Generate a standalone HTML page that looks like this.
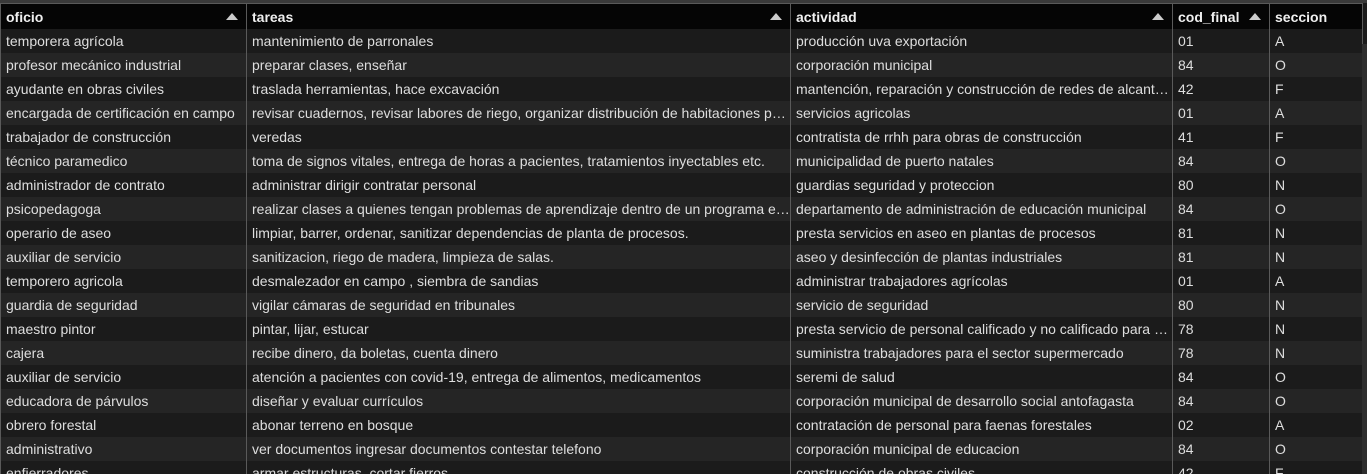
<!DOCTYPE html><html style="overflow:hidden;height:474px"><head><meta charset="utf-8"><style>
body{margin:0;width:1367px;height:474px;overflow:hidden;background:#1b1b1b;font-family:"Liberation Sans","DejaVu Sans",sans-serif;font-size:14px;color:#dedede;position:relative}
.top{position:absolute;left:0;top:0;width:1367px;height:3px;background:#3a3a3a}
table{position:absolute;left:0;top:3px;border-collapse:collapse;table-layout:fixed;width:1362px}
td,th{height:24px;padding:0 0 0 5px;white-space:nowrap;overflow:hidden;text-overflow:ellipsis;border-right:1px solid #5a5a5a;line-height:24px;text-align:left}
th{background:#050505;color:#f0f0f0;font-weight:bold;height:25px;border-left:1px solid #5a5a5a;border-top:1px solid #5a5a5a;position:relative}
th .a{position:absolute;right:8px;top:9px;width:0;height:0;border-left:6px solid transparent;border-right:6px solid transparent;border-bottom:7px solid #ccc}
tr:nth-child(odd) td{background:#1b1b1b}
tr:nth-child(even) td{background:#252525}
td:first-child{border-left:1px solid #5a5a5a}
.sb{position:absolute;left:1362px;top:44px;width:5px;height:430px;background:#2e2e2e}
</style></head><body><div class="top"></div>
<table>
<colgroup><col style="width:246px"><col style="width:544px"><col style="width:382px"><col style="width:97px"><col style="width:93px"></colgroup>
<thead><tr><th>oficio<span class="a"></span></th><th>tareas<span class="a"></span></th><th>actividad<span class="a"></span></th><th>cod_final<span class="a"></span></th><th>seccion</th></tr></thead>
<tbody>
<tr><td>temporera agrícola</td><td>mantenimiento de parronales</td><td>producción uva exportación</td><td>01</td><td>A</td></tr>
<tr><td>profesor mecánico industrial</td><td>preparar clases, enseñar</td><td>corporación municipal</td><td>84</td><td>O</td></tr>
<tr><td>ayudante en obras civiles</td><td>traslada herramientas, hace excavación</td><td>mantención, reparación y construcción de redes de alcantarillado</td><td>42</td><td>F</td></tr>
<tr><td>encargada de certificación en campo</td><td>revisar cuadernos, revisar labores de riego, organizar distribución de habitaciones para</td><td>servicios agricolas</td><td>01</td><td>A</td></tr>
<tr><td>trabajador de construcción</td><td>veredas</td><td>contratista de rrhh para obras de construcción</td><td>41</td><td>F</td></tr>
<tr><td>técnico paramedico</td><td>toma de signos vitales, entrega de horas a pacientes, tratamientos inyectables etc.</td><td>municipalidad de puerto natales</td><td>84</td><td>O</td></tr>
<tr><td>administrador de contrato</td><td>administrar dirigir contratar personal</td><td>guardias seguridad y proteccion</td><td>80</td><td>N</td></tr>
<tr><td>psicopedagoga</td><td>realizar clases a quienes tengan problemas de aprendizaje dentro de un programa educativo</td><td>departamento de administración de educación municipal</td><td>84</td><td>O</td></tr>
<tr><td>operario de aseo</td><td>limpiar, barrer, ordenar, sanitizar dependencias de planta de procesos.</td><td>presta servicios en aseo en plantas de procesos</td><td>81</td><td>N</td></tr>
<tr><td>auxiliar de servicio</td><td>sanitizacion, riego de madera, limpieza de salas.</td><td>aseo y desinfección de plantas industriales</td><td>81</td><td>N</td></tr>
<tr><td>temporero agricola</td><td>desmalezador en campo , siembra de sandias</td><td>administrar trabajadores agrícolas</td><td>01</td><td>A</td></tr>
<tr><td>guardia de seguridad</td><td>vigilar cámaras de seguridad en tribunales</td><td>servicio de seguridad</td><td>80</td><td>N</td></tr>
<tr><td>maestro pintor</td><td>pintar, lijar, estucar</td><td>presta servicio de personal calificado y no calificado para obras</td><td>78</td><td>N</td></tr>
<tr><td>cajera</td><td>recibe dinero, da boletas, cuenta dinero</td><td>suministra trabajadores para el sector supermercado</td><td>78</td><td>N</td></tr>
<tr><td>auxiliar de servicio</td><td>atención a pacientes con covid-19, entrega de alimentos, medicamentos</td><td>seremi de salud</td><td>84</td><td>O</td></tr>
<tr><td>educadora de párvulos</td><td>diseñar y evaluar currículos</td><td>corporación municipal de desarrollo social antofagasta</td><td>84</td><td>O</td></tr>
<tr><td>obrero forestal</td><td>abonar terreno en bosque</td><td>contratación de personal para faenas forestales</td><td>02</td><td>A</td></tr>
<tr><td>administrativo</td><td>ver documentos ingresar documentos contestar telefono</td><td>corporación municipal de educacion</td><td>84</td><td>O</td></tr>
<tr><td>enfierradores</td><td>armar estructuras, cortar fierros</td><td>construcción de obras civiles</td><td>42</td><td>F</td></tr>
</tbody></table>
<div class="sb"></div>
</body></html>
